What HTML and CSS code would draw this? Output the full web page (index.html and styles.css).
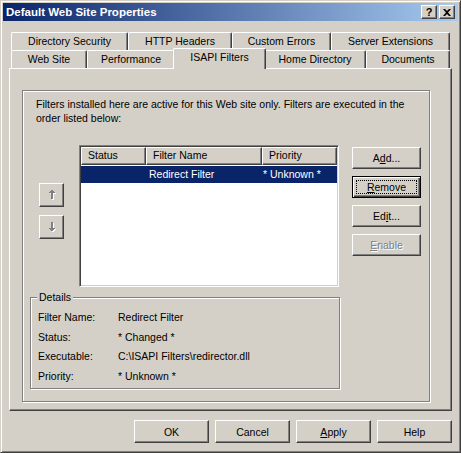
FILE: index.html
```html
<!DOCTYPE html>
<html>
<head>
<meta charset="utf-8">
<title>Default Web Site Properties</title>
<link rel="stylesheet" href="styles.css">
</head>
<body>
<div class="window">
  <div class="titlebar">
    <span class="title">Default Web Site Properties</span>
    <div class="tb-btns">
      <span class="tb-btn">?</span>
      <span class="tb-btn"><svg width="8" height="7" viewBox="0 0 8 7"><path d="M0 0h2l2 2 2-2h2L5 3.5 8 7H6L4 5 2 7H0l3-3.5z" fill="#000"/></svg></span>
    </div>
  </div>
  <div class="content">
    <div class="tabs">
      <div class="tabrow">
        <div class="tab t-dirsec">Directory Security</div>
        <div class="tab t-http">HTTP Headers</div>
        <div class="tab t-err">Custom Errors</div>
        <div class="tab t-ext">Server Extensions</div>
      </div>
      <div class="tabrow front">
        <div class="tab t-site">Web Site</div>
        <div class="tab t-perf">Performance</div>
        <div class="tab t-isapi sel">ISAPI Filters</div>
        <div class="tab t-home">Home Directory</div>
        <div class="tab t-docs">Documents</div>
      </div>
    </div>
    <div class="panel">
      <div class="frame">
        <p class="desc">Filters installed here are active for this Web site only. Filters are executed in the<br>order listed below:</p>
        <div class="listarea">
          <div class="arrows">
            <div class="arrow"><svg width="8" height="10" viewBox="0 0 8 10"><path transform="translate(1 1)" fill="#fff" d="M3 0H5V1H6V2H7V3H5V9H3V3H1V2H2V1H3Z"/><path fill="#808080" d="M3 0H5V1H6V2H7V3H5V9H3V3H1V2H2V1H3Z"/></svg></div>
            <div class="arrow"><svg width="8" height="10" viewBox="0 0 8 10"><path transform="translate(1 1)" fill="#fff" d="M3 9H5V8H6V7H7V6H5V0H3V6H1V7H2V8H3Z"/><path fill="#808080" d="M3 9H5V8H6V7H7V6H5V0H3V6H1V7H2V8H3Z"/></svg></div>
          </div>
          <div class="list">
            <div class="lhead">
              <div class="hc c-status">Status</div>
              <div class="hc c-name">Filter Name</div>
              <div class="hc c-prio">Priority</div>
            </div>
            <div class="lrow">
              <div class="rc c-status"></div>
              <div class="rc c-name">Redirect Filter</div>
              <div class="rc c-prio rc-prio">* Unknown *</div>
            </div>
          </div>
          <div class="side">
            <div class="btn side-btn">A<u>d</u>d...</div>
            <div class="btn side-btn default"><span class="focus"></span><u>R</u>emove</div>
            <div class="btn side-btn">Ed<u>i</u>t...</div>
            <div class="btn side-btn disabled"><u>E</u>nable</div>
          </div>
        </div>
        <div class="details">
          <span class="legend">Details</span>
          <div class="drow"><span class="dlabel">Filter Name:</span><span>Redirect Filter</span></div>
          <div class="drow"><span class="dlabel">Status:</span><span>* Changed *</span></div>
          <div class="drow"><span class="dlabel">Executable:</span><span>C:\ISAPI Filters\redirector.dll</span></div>
          <div class="drow"><span class="dlabel">Priority:</span><span>* Unknown *</span></div>
        </div>
      </div>
    </div>
    <div class="footer">
      <div class="btn foot-btn">OK</div>
      <div class="btn foot-btn">Cancel</div>
      <div class="btn foot-btn"><u>A</u>pply</div>
      <div class="btn foot-btn">Help</div>
    </div>
  </div>
</div>
</body>
</html>
```
FILE: styles.css
```css
* { box-sizing: border-box; }
html, body { margin: 0; padding: 0; }
body {
  background: #d4d0c8;
  font-family: "Liberation Sans", Arial, sans-serif;
  font-size: 10.5px;
  color: #000;
}
.window {
  width: 461px;
  height: 453px;
  border: 1px solid;
  border-color: #d4d0c8 #404040 #404040 #d4d0c8;
  box-shadow: inset 1px 1px #fff, inset -1px -1px #808080;
  padding: 2px;
  display: flex;
  flex-direction: column;
  background: #d4d0c8;
}
.titlebar {
  height: 18px;
  flex: none;
  background: linear-gradient(to right, #0a246a, #a6caf0);
  display: flex;
  align-items: center;
  justify-content: space-between;
  padding: 0 3px;
}
.title { color: #fff; font-weight: bold; font-size: 11.5px; }
.tb-btns { display: flex; gap: 2px; }
.tb-btn {
  width: 16px;
  height: 14px;
  background: #d4d0c8;
  border: 1px solid;
  border-color: #fff #404040 #404040 #fff;
  box-shadow: inset -1px -1px #808080;
  display: flex;
  align-items: center;
  justify-content: center;
  font-weight: bold;
  font-size: 11px;
  line-height: 12px;
}
.content { flex: 1; padding: 11px 6px 0; display: flex; flex-direction: column; }
.tabs { margin: 0 2px; }
.tabrow { display: flex; height: 18px; }
.tabrow.front { align-items: flex-end; }
.tab {
  height: 18px;
  flex: none;
  border-top: 1px solid #fff;
  border-left: 1px solid #fff;
  border-right: 1px solid #404040;
  box-shadow: inset -1px 0 #808080;
  border-radius: 2px 2px 0 0;
  text-align: center;
  line-height: 17px;
  white-space: nowrap;
  background: #d4d0c8;
}
.t-dirsec { width: 117px; }
.t-http { width: 104px; }
.t-err { width: 99px; }
.t-ext { width: 119px; }
.t-site { width: 76px; }
.t-perf { width: 88px; }
.t-isapi { width: 89px; }
.t-home { width: 102px; }
.t-docs { width: 84px; }
.tab.sel {
  width: 93px;
  height: 21px;
  margin: 0 -2px -1px;
  position: relative;
  z-index: 1;
  line-height: 16px;
}
.panel {
  height: 343px;
  flex: none;
  border: 1px solid;
  border-color: #fff #404040 #404040 #fff;
  box-shadow: inset -1px -1px #808080;
  padding: 21px 0 0 12px;
}
.frame {
  width: 408px;
  height: 312px;
  border: 1px solid #808080;
  box-shadow: inset 1px 1px #fff, 1px 1px #fff;
}
.desc { margin: 6px 0 0 13px; line-height: 14px; white-space: nowrap; }
.listarea { display: flex; align-items: flex-start; margin-top: 20px; }
.arrows { margin: 38px 0 0 16px; display: flex; flex-direction: column; gap: 8px; }
.arrow {
  width: 25px;
  height: 24px;
  background: #d4d0c8;
  border: 1px solid;
  border-color: #fff #404040 #404040 #fff;
  box-shadow: inset -1px -1px #808080;
  display: flex;
  align-items: center;
  justify-content: center;
}
.list {
  margin-left: 15px;
  width: 260px;
  height: 142px;
  border: 1px solid;
  border-color: #808080 #fff #fff #808080;
  box-shadow: inset 1px 1px #404040, inset -1px -1px #d4d0c8;
  background: #fff;
  padding: 1px;
  overflow: hidden;
}
.lhead { display: flex; height: 18px; background: #d4d0c8; }
.hc {
  flex: none;
  border: 1px solid;
  border-color: #fff #404040 #404040 #fff;
  box-shadow: inset -1px -1px #808080;
  padding-left: 6px;
  line-height: 15px;
  white-space: nowrap;
}
.c-status { width: 65px; }
.c-name { width: 116px; }
.c-prio { width: 75px; }
.lrow {
  display: flex;
  height: 17px;
  margin-top: 1px;
  background: #0a246a;
  color: #fff;
  line-height: 17px;
}
.rc { flex: none; padding-left: 3px; white-space: nowrap; }
.rc-prio { padding-left: 1px; }
.side { margin: 2px 0 0 13px; display: flex; flex-direction: column; gap: 7px; }
.btn {
  position: relative;
  background: #d4d0c8;
  border: 1px solid;
  border-color: #fff #404040 #404040 #fff;
  box-shadow: inset -1px -1px #808080;
  display: flex;
  align-items: center;
  justify-content: center;
  white-space: nowrap;
}
.side-btn { width: 69px; height: 22px; }
.btn.default {
  border-color: #000;
  box-shadow: inset 1px 1px #fff, inset -1px -1px #404040, inset -2px -2px #808080;
}
.focus { position: absolute; inset: 3px; border: 1px dotted #000; }
.btn.disabled { color: #808080; text-shadow: 1px 1px #fff; }
.details {
  position: relative;
  margin: 10px 0 0 7px;
  width: 310px;
  height: 92px;
  border: 1px solid #808080;
  box-shadow: inset 1px 1px #fff, 1px 1px #fff;
  padding: 10px 0 0 7px;
}
.legend {
  position: absolute;
  top: -8px;
  left: 6px;
  padding: 0 2px;
  line-height: 14px;
  background: #d4d0c8;
}
.drow { display: flex; line-height: 19.5px; white-space: nowrap; }
.dlabel { width: 80px; flex: none; }
.footer { display: flex; justify-content: flex-end; gap: 6px; margin-top: 9px; }
.foot-btn { width: 75px; height: 23px; }
```
